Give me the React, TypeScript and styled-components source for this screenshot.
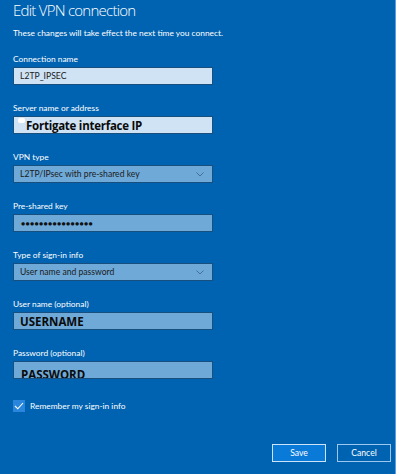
import React from 'react';
import styled, { createGlobalStyle } from 'styled-components';

const GlobalStyle = createGlobalStyle`
  html, body {
    margin: 0;
    padding: 0;
    background: #ffffff;
  }
  body {
    font-family: Lato, "Open Sans", "Liberation Sans", sans-serif;
  }
`;

const Page = styled.div`
  display: flex;
  width: 399px;
  height: 474px;
  overflow: hidden;
`;

const Panel = styled.div`
  width: 382px;
  height: 474px;
  background: #0063b1;
  border-right: 1px solid #5a9fe0;
  padding-left: 13px;
  display: flex;
  flex-direction: column;
  color: #ffffff;
`;

const Title = styled.h1`
  margin: 0;
  font-family: "Open Sans", "Liberation Sans", sans-serif;
  font-size: 15px;
  font-weight: 300;
  line-height: 20px;
  letter-spacing: -0.75px;
`;

const Subtitle = styled.p`
  margin: 7px 0 14px;
  font-size: 8.4px;
  line-height: 12px;
`;

const Field = styled.div`
  display: flex;
  flex-direction: column;
  margin-bottom: 17px;
`;

const Label = styled.label`
  font-size: 8.4px;
  line-height: 12px;
  margin-bottom: 2px;
`;

const Box = styled.div<{ $light?: boolean; $start?: boolean }>`
  box-sizing: border-box;
  width: 200px;
  height: 18px;
  background: ${(p) => (p.$light ? '#cfe3f4' : '#6ea9d8')};
  border: 1px solid #174f7f;
  display: flex;
  align-items: center;
  justify-content: ${(p) => (p.$start ? 'flex-start' : 'space-between')};
  padding: 0 8px 0 4px;
  color: #1b1b1b;
  font-size: 8.6px;
  overflow: hidden;
`;

const Value = styled.span`
  padding-left: 2px;
`;

const BigText = styled.span<{ $indent: number; $drop?: number }>`
  font-family: "Open Sans", "Liberation Sans", sans-serif;
  font-weight: 700;
  font-size: 11.5px;
  color: #0a0a0a;
  padding-left: ${(p) => p.$indent}px;
  margin-top: ${(p) => p.$drop ?? 0}px;
`;

const ServerText = styled(BigText)`
  letter-spacing: -0.25px;
`;

const Smudge = styled.span`
  display: inline-block;
  width: 7px;
  height: 5px;
  background: #ffffff;
  border-radius: 2px;
  margin-right: -7px;
  align-self: flex-start;
  margin-top: 1px;
`;

const Dots = styled.span`
  padding-left: 3px;
  font-size: 7px;
  letter-spacing: 0.3px;
  color: #111;
`;

const Chevron = () => (
  <svg width="8" height="5" viewBox="0 0 8 5">
    <path d="M0.5 0.5 L4 4 L7.5 0.5" fill="none" stroke="#3f6f99" strokeWidth="1" />
  </svg>
);

const CheckRow = styled.div`
  display: flex;
  align-items: center;
  gap: 5px;
  margin-top: 21px;
  font-size: 8.4px;
  line-height: 12px;
`;

const CheckBox = styled.span`
  width: 12px;
  height: 12px;
  background: #2a86dc;
  display: flex;
  align-items: center;
  justify-content: center;
`;

const Footer = styled.div`
  display: flex;
  justify-content: flex-end;
  gap: 11px;
  margin-top: 32px;
  padding-right: 4px;
`;

const Button = styled.button<{ $primary?: boolean }>`
  box-sizing: border-box;
  width: 54px;
  height: 18px;
  padding: 0;
  border: 1.5px solid ${(p) => (p.$primary ? '#cde4f8' : '#9ec7ef')};
  background: ${(p) => (p.$primary ? '#0a7ad8' : '#0063b1')};
  color: #ffffff;
  font-family: Lato, "Open Sans", sans-serif;
  font-size: 8.6px;
`;

export default function App() {
  return (
    <>
      <GlobalStyle />
      <Page>
        <Panel>
          <Title>Edit VPN connection</Title>
          <Subtitle>These changes will take effect the next time you connect.</Subtitle>

          <Field>
            <Label>Connection name</Label>
            <Box $light>
              <Value>L2TP_IPSEC</Value>
            </Box>
          </Field>

          <Field>
            <Label>Server name or address</Label>
            <Box $light $start>
              <Smudge />
              <ServerText $indent={8}>Fortigate interface IP</ServerText>
            </Box>
          </Field>

          <Field>
            <Label>VPN type</Label>
            <Box>
              <Value>L2TP/IPsec with pre-shared key</Value>
              <Chevron />
            </Box>
          </Field>

          <Field>
            <Label>Pre-shared key</Label>
            <Box $start>
              <Dots>{'●'.repeat(16)}</Dots>
            </Box>
          </Field>

          <Field>
            <Label>Type of sign-in info</Label>
            <Box>
              <Value>User name and password</Value>
              <Chevron />
            </Box>
          </Field>

          <Field>
            <Label>User name (optional)</Label>
            <Box $start>
              <BigText $indent={2}>USERNAME</BigText>
            </Box>
          </Field>

          <Field style={{ marginBottom: 0 }}>
            <Label>Password (optional)</Label>
            <Box $start>
              <BigText $indent={3} $drop={8}>PASSWORD</BigText>
            </Box>
          </Field>

          <CheckRow>
            <CheckBox>
              <svg width="10" height="8" viewBox="0 0 10 8">
                <path d="M1 4 L3.8 6.8 L9 1" fill="none" stroke="#ffffff" strokeWidth="1.1" />
              </svg>
            </CheckBox>
            Remember my sign-in info
          </CheckRow>

          <Footer>
            <Button $primary>Save</Button>
            <Button>Cancel</Button>
          </Footer>
        </Panel>
      </Page>
    </>
  );
}
